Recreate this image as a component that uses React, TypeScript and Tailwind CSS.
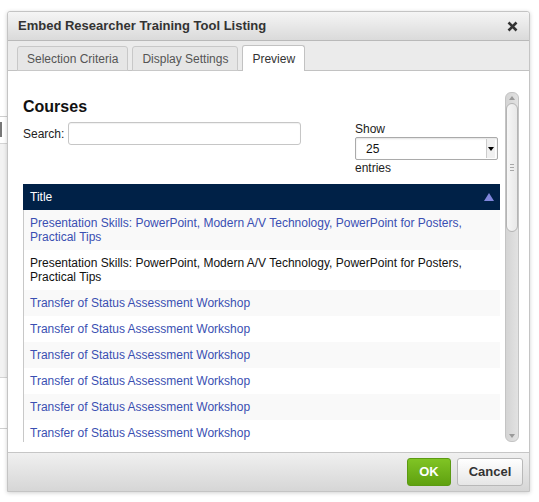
const rows = [
  { text: "Presentation Skills: PowerPoint, Modern A/V Technology, PowerPoint for Posters, Practical Tips", link: true },
  { text: "Presentation Skills: PowerPoint, Modern A/V Technology, PowerPoint for Posters, Practical Tips", link: false },
  { text: "Transfer of Status Assessment Workshop", link: true },
  { text: "Transfer of Status Assessment Workshop", link: true },
  { text: "Transfer of Status Assessment Workshop", link: true },
  { text: "Transfer of Status Assessment Workshop", link: true },
  { text: "Transfer of Status Assessment Workshop", link: true },
  { text: "Transfer of Status Assessment Workshop", link: true },
];

const font = { fontFamily: '"Liberation Sans", Arial, sans-serif' };

const Scrollbar = () => (
  <div className="relative w-[14px] h-full shrink-0 rounded-[6px] border border-[#c4c4c4] bg-gradient-to-r from-[#d4d4d4] to-[#e2e2e2] flex flex-col items-center">
    {/* up arrow */}
    <div className="h-[10px] w-full flex items-center justify-center">
      <svg width="6" height="4" viewBox="0 0 6 4"><path d="M0 4 L3 0 L6 4Z" fill="#9a9a9a" /></svg>
    </div>
    {/* thumb */}
    <div className="w-[12px] h-[129px] rounded-[6px] border border-[#b4b4b4] bg-gradient-to-r from-[#f6f6f6] to-[#e8e8e8] flex flex-col items-center justify-center gap-[2px]">
      <div className="w-[4px] h-px bg-[#a8a8a8]" />
      <div className="w-[4px] h-px bg-[#a8a8a8]" />
      <div className="w-[4px] h-px bg-[#a8a8a8]" />
    </div>
    <div className="flex-1" />
    <div className="h-[10px] w-full flex items-center justify-center">
      <svg width="6" height="4" viewBox="0 0 6 4"><path d="M0 0 L3 4 L6 0Z" fill="#9a9a9a" /></svg>
    </div>
  </div>
);

const App = () => {
  return (
    <div className="relative w-[539px] h-[502px] bg-white overflow-hidden" style={font}>
      {/* page behind the dialog */}
      <div className="absolute left-0 top-[116px] w-[20px] h-px bg-[#cfcfcf]" />
      <div className="absolute left-0 top-[122px] w-[2px] h-[15px] bg-[#777]" />
      <div className="absolute left-0 top-[143px] w-[20px] h-[235px] bg-[#f2f2f2] border-y border-[#d4d4d4]" />
      <div className="absolute left-0 top-[428px] w-[20px] h-px bg-[#cfcfcf]" />

      {/* dialog */}
      <div className="absolute left-[7px] top-[11px] w-[523px] h-[481px] flex flex-col border border-[#c4c4c4] rounded-t-[3px] bg-white shadow-[0_1px_4px_rgba(0,0,0,0.18)]">
        {/* title bar */}
        <div className="h-[29px] shrink-0 flex items-center justify-between pl-[10px] pr-[11px] border-b border-[#b9b9b9] bg-gradient-to-b from-[#f5f5f5] to-[#dadada] rounded-t-[3px]">
          <span className="text-[13px] font-bold text-[#333]">Embed Researcher Training Tool Listing</span>
          <svg width="11" height="11" viewBox="0 0 11 11">
            <path d="M1.5 1.5 L9.5 9.5 M9.5 1.5 L1.5 9.5" stroke="#333" strokeWidth="2.6" />
          </svg>
        </div>

        {/* tabs */}
        <div className="h-[30px] shrink-0 flex items-end gap-[4px] pl-[9px] bg-[#ebebeb] border-b border-[#c2c2c2]">
          <div className="h-[25px] -mb-px px-[9px] flex items-center text-[12px] text-[#555] bg-[#e6e6e6] border border-[#c8c8c8] rounded-t-[3px]">Selection Criteria</div>
          <div className="h-[25px] -mb-px px-[9px] flex items-center text-[12px] text-[#555] bg-[#e6e6e6] border border-[#c8c8c8] rounded-t-[3px]">Display Settings</div>
          <div className="h-[26px] -mb-px px-[9px] flex items-center text-[12px] text-[#333] bg-white border border-b-0 border-[#c2c2c2] rounded-t-[3px]">Preview</div>
        </div>

        {/* content */}
        <div className="flex-1 min-h-0 pt-[21px] pb-[10px] pl-[8px] pr-[10px]">
          <div className="h-full flex">
            <div className="flex-1 min-w-0 h-full overflow-hidden pl-[7px] pr-[5px]">
              <h2 className="mt-[5px] text-[16px] leading-[20px] font-bold text-[#111]">Courses</h2>

              <div className="mt-[5px] flex justify-between items-start">
                <div className="flex items-center gap-[4px]">
                  <span className="text-[12px] text-[#222]">Search:</span>
                  <div className="w-[233px] h-[23px] rounded-[3px] border border-[#c6c6c6] bg-white shadow-[inset_0_1px_1px_rgba(0,0,0,0.06)]" />
                </div>
                <div className="w-[143px] mr-[2px] text-[12px] text-[#222]">
                  <div className="leading-[14px]">Show</div>
                  <div className="mt-[1px] h-[23px] flex items-center justify-between pl-[10px] pr-[2px] border border-[#aaa] rounded-[2px] bg-white shadow-[inset_0_1px_2px_rgba(0,0,0,0.12)]">
                    <span className="text-[12px] text-[#111]">25</span>
                    <div className="h-[19px] w-[9px] flex items-center justify-center bg-[#f0f0f0] border-l border-[#ccc]">
                      <svg width="6" height="4" viewBox="0 0 6 4"><path d="M0 0 L3 4 L6 0Z" fill="#000" /></svg>
                    </div>
                  </div>
                  <div className="leading-[14px] mt-[1px]">entries</div>
                </div>
              </div>

              <div className="mt-[9px]">
                <div className="h-[26px] flex items-center justify-between pl-[7px] pr-[6px] bg-[#002147] text-white text-[12px]">
                  <span>Title</span>
                  <svg width="10" height="8" viewBox="0 0 10 8"><path d="M0 8 L5 0 L10 8Z" fill="#7f86dc" /></svg>
                </div>
                <div className="border-l border-[#c8c8c8]">
                  {rows.map((row, i) => (
                    <div
                      key={i}
                      className={
                        "py-[6px] pl-[6px] pr-[24px] text-[12px] leading-[14px] " +
                        (i % 2 === 0 ? "bg-[#f9f9f9] " : "bg-white ") +
                        (row.link ? "text-[#3a4fb2]" : "text-[#111]")
                      }
                    >
                      {row.text}
                    </div>
                  ))}
                </div>
              </div>
            </div>
            <Scrollbar />
          </div>
        </div>

        {/* footer */}
        <div className="h-[39px] shrink-0 flex items-center justify-end gap-[6px] pr-[6px] border-t border-[#c6c6c6] bg-gradient-to-b from-[#f0f0f0] to-[#d6d6d6]">
          <button className="h-[28px] w-[44px] rounded-[3px] border border-[#5b9a12] bg-gradient-to-b from-[#80c424] to-[#5fa10f] text-white text-[13px] font-bold">OK</button>
          <button className="h-[28px] w-[66px] rounded-[3px] border border-[#b8b8b8] bg-gradient-to-b from-white to-[#e6e6e6] text-[#333] text-[13px] font-bold">Cancel</button>
        </div>
      </div>
    </div>
  );
};

export default App;
